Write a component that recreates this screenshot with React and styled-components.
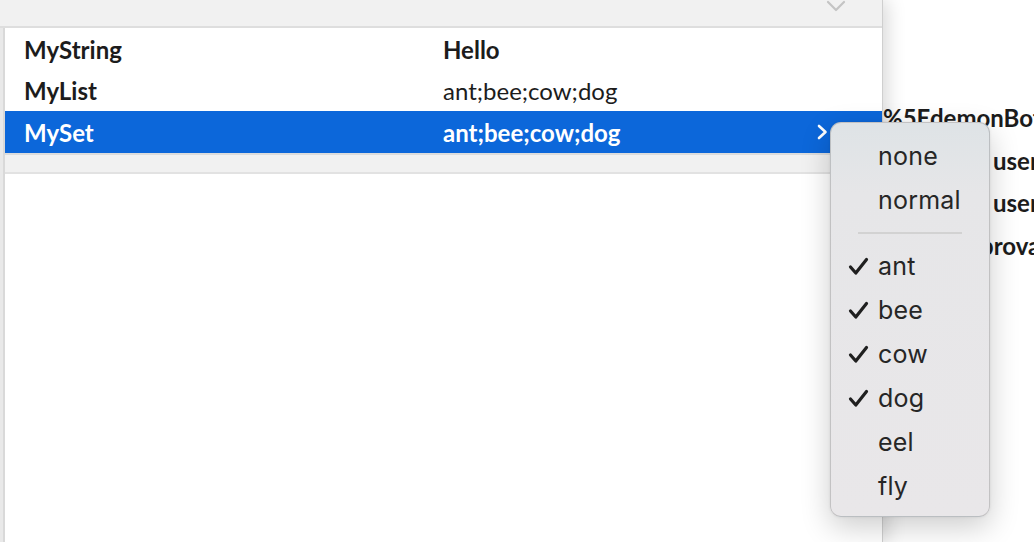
import React from 'react';
import styled, { createGlobalStyle } from 'styled-components';

const GlobalStyle = createGlobalStyle`
  html, body {
    margin: 0;
    padding: 0;
    background: #fff;
    overflow: hidden;
  }
`;

const Screen = styled.div`
  position: relative;
  display: flex;
  width: 1034px;
  height: 542px;
  overflow: hidden;
  background: #fff;
  font-family: Lato, "Liberation Sans", sans-serif;
  color: #1c1c1c;
`;

const Panel = styled.div`
  position: relative;
  z-index: 1;
  width: 879px;
  flex-shrink: 0;
  display: flex;
  flex-direction: column;
  border-left: 3px solid #e9e9e9;
  border-right: 1px solid #cfcfcf;
  box-shadow: 4px 0 18px rgba(0, 0, 0, 0.16);
`;

const Body = styled.div`
  flex: 1;
  display: flex;
  flex-direction: column;
  border-left: 2px solid #d9d9d9;
  background: #fff;
`;

const HeaderBar = styled.div`
  height: 26px;
  display: flex;
  justify-content: flex-end;
  align-items: flex-start;
  padding-right: 36px;
  background: #f1f1f1;
  border-bottom: 2px solid #dedede;
  margin-left: -5px;
  padding-left: 5px;
`;

const Row = styled.div`
  display: grid;
  grid-template-columns: 419px 1fr auto;
  align-items: center;
  height: ${p => p.$h || 41}px;
  padding: 0 54px 0 19px;
  font-size: 24px;
  background: ${p => (p.$selected ? '#0c67da' : 'transparent')};
  color: ${p => (p.$selected ? '#fff' : '#1c1c1c')};
`;

const Name = styled.span`
  font-weight: 700;
`;

const Value = styled.span`
  font-weight: ${p => (p.$bold ? 700 : 400)};
`;

const Footer = styled.div`
  height: 17px;
  background: #f1f1f1;
  border-top: 2px solid #dcdcdc;
  border-bottom: 2px solid #e2e2e2;
`;

const Side = styled.div`
  flex: 1;
  padding-top: 97px;
  background: #fff;
  overflow: hidden;
`;

const SideLine = styled.div`
  height: 42.5px;
  line-height: 42px;
  padding-left: ${p => p.$indent}px;
  white-space: nowrap;
  font-size: 24px;
  font-weight: 700;
  color: #1c1c1c;
`;

const Menu = styled.div`
  position: absolute;
  z-index: 2;
  left: 830px;
  top: 122px;
  width: 158px;
  padding: 11px 0 8px;
  border-radius: 11px;
  border: 1px solid rgba(0, 0, 0, 0.16);
  background: linear-gradient(180deg, #dee3e6 0px, #e6e6e8 70px, #e9e7e9 100%);
  box-shadow: 0 10px 30px rgba(0, 0, 0, 0.2), 0 0 3px rgba(0, 0, 0, 0.08);
  font-family: Inter, "Noto Sans", sans-serif;
  color: #262626;
`;

const Item = styled.div`
  display: flex;
  align-items: center;
  height: 44px;
  font-size: 25px;
  letter-spacing: 0.2px;
`;

const Check = styled.span`
  width: 47px;
  padding-left: 17px;
  box-sizing: border-box;
  display: flex;
  align-items: center;
`;

const Separator = styled.div`
  height: 2px;
  margin: 10px 27px 10px 27px;
  background: #d2d2d2;
`;

const DownChevron = () => (
  <svg width="20" height="12" viewBox="0 0 20 12" fill="none">
    <path d="M2 2 L10 10 L18 2" stroke="#c4c4c4" strokeWidth="2.2" strokeLinecap="round" strokeLinejoin="round" />
  </svg>
);

const RightChevron = () => (
  <svg width="12" height="16" viewBox="0 0 12 16" fill="none">
    <path d="M3 2 L9.5 8 L3 14" stroke="#fff" strokeWidth="2.6" strokeLinecap="round" strokeLinejoin="round" />
  </svg>
);

const CheckMark = () => (
  <svg width="21" height="19" viewBox="0 0 21 19" fill="none">
    <path d="M2.5 10 L7.8 16 L18.5 2.5" stroke="#1f1f1f" strokeWidth="3.2" strokeLinecap="round" strokeLinejoin="round" />
  </svg>
);

const rows = [
  { name: 'MyString', value: 'Hello', bold: true, h: 42 },
  { name: 'MyList', value: 'ant;bee;cow;dog', h: 41 },
  { name: 'MySet', value: 'ant;bee;cow;dog', bold: true, selected: true, h: 42 },
];

const options = [
  { label: 'ant', checked: true },
  { label: 'bee', checked: true },
  { label: 'cow', checked: true },
  { label: 'dog', checked: true },
  { label: 'eel' },
  { label: 'fly' },
];

export default function App() {
  return (
    <Screen>
      <GlobalStyle />
      <Panel>
        <HeaderBar>
          <DownChevron />
        </HeaderBar>
        <Body>
          {rows.map(r => (
            <Row key={r.name} $selected={r.selected} $h={r.h}>
              <Name>{r.name}</Name>
              <Value $bold={r.bold}>{r.value}</Value>
              {r.selected ? <RightChevron /> : <span />}
            </Row>
          ))}
          <Footer />
        </Body>
      </Panel>
      <Side>
        <SideLine $indent={0}>%5EdemonBot</SideLine>
        <SideLine $indent={110}>user</SideLine>
        <SideLine $indent={110}>user</SideLine>
        <SideLine $indent={97}>prova</SideLine>
      </Side>
      <Menu>
        <Item><Check />none</Item>
        <Item><Check />normal</Item>
        <Separator />
        {options.map(o => (
          <Item key={o.label}>
            <Check>{o.checked ? <CheckMark /> : null}</Check>
            {o.label}
          </Item>
        ))}
      </Menu>
    </Screen>
  );
}
